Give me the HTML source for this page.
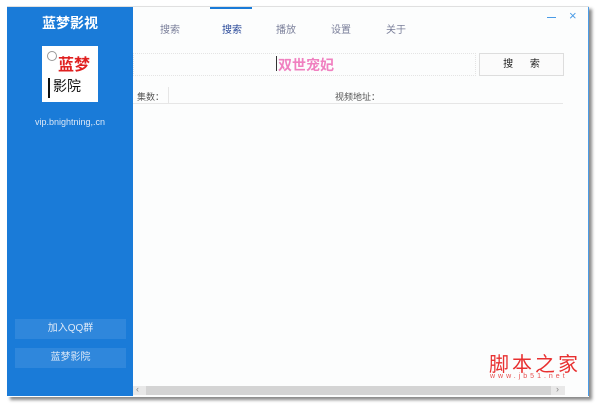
<!DOCTYPE html>
<html><head><meta charset="utf-8"><style>
body{margin:0;width:600px;height:406px;background:#fff;position:relative;overflow:hidden;font-family:"Liberation Sans","Noto Sans CJK SC",sans-serif;}
.a{position:absolute}
.win{left:7px;top:6px;width:582px;height:390px;background:#fcfdfd;border-top:1px solid #e0e0e0;box-shadow:3px 3px 3px #8a8a8a;}
.side{left:7px;top:7px;width:126px;height:389px;background:#1a7bd8;}
.t{font-size:10px;color:#7a7f9a;top:21px}
.btn{left:15px;width:111px;height:20px;background:#2f87dc;color:#dfeaf8;font-size:10px;text-align:center;line-height:20px}
</style></head><body>
<div class="a win"></div>
<div class="a" style="left:588px;top:7px;width:1px;height:389px;background:#4a9be6"></div>
<div class="a side"></div>
<div class="a" style="left:7px;top:13px;width:126px;text-align:center;color:#fff;font-weight:bold;font-size:14px">蓝梦影视</div>
<div class="a" style="left:42px;top:46px;width:56px;height:56px;background:#fff"></div>
<div class="a" style="left:58px;top:57px;color:#e02020;font-size:16px;font-weight:bold;line-height:17px">蓝梦</div>
<div class="a" style="left:48px;top:78px;color:#111;font-size:14px;line-height:16px;border-left:2px solid #111;padding-left:3px;height:20px">影院</div>
<div class="a" style="left:47px;top:51px;width:8px;height:8px;border:1px solid #999;border-radius:5px"></div>
<div class="a" style="left:7px;top:117px;width:126px;text-align:center;color:#dde9f8;font-size:9px">vip.bnightning,.cn</div>
<div class="a btn" style="top:319px">加入QQ群</div>
<div class="a btn" style="top:348px">蓝梦影院</div>
<div class="a" style="left:210px;top:7px;width:42px;height:2px;background:#1a7bd8"></div>
<div class="a t" style="left:160px">搜索</div>
<div class="a t" style="left:222px;color:#2a4a9a">搜索</div>
<div class="a t" style="left:276px">播放</div>
<div class="a t" style="left:331px">设置</div>
<div class="a t" style="left:386px">关于</div>
<div class="a" style="left:547px;top:17px;width:9px;height:1px;background:#4a9be6"></div>
<div class="a" style="left:569px;top:8px;color:#4a9be6;font-size:13px">×</div>
<div class="a" style="left:133px;top:53px;width:341px;height:21px;border:1px dotted #e4e4e4"></div>
<div class="a" style="left:276px;top:56px;width:1px;height:15px;background:#333"></div>
<div class="a" style="left:278px;top:55px;color:#f080c0;font-size:14px;font-weight:bold">双世宠妃</div>
<div class="a" style="left:479px;top:53px;width:83px;height:21px;border:1px solid #ddd;background:#fbfbfb;font-size:10px;text-align:center;line-height:21px;color:#222">搜&nbsp;&nbsp;&nbsp;&nbsp;&nbsp;&nbsp;索</div>
<div class="a" style="left:137px;top:90px;font-size:9px;color:#555">集数：</div>
<div class="a" style="left:168px;top:87px;width:1px;height:16px;background:#e6e6e6"></div>
<div class="a" style="left:335px;top:90px;font-size:9px;color:#555">视频地址：</div>
<div class="a" style="left:133px;top:103px;width:430px;height:1px;background:#e6e6e6"></div>
<div class="a" style="left:133px;top:386px;width:432px;height:9px;background:#e8e8e8"></div>
<div class="a" style="left:146px;top:386px;width:405px;height:9px;background:#d4d4d4"></div>
<div class="a" style="left:136px;top:384px;font-size:9px;color:#888">‹</div>
<div class="a" style="left:556px;top:384px;font-size:9px;color:#888">›</div>
<div class="a" style="left:489px;top:348px;color:#e83030;font-size:20px;letter-spacing:3px;font-family:'Noto Sans CJK SC',sans-serif">脚本之家</div>
<div class="a" style="left:490px;top:373px;color:#e85050;font-size:7px;letter-spacing:3px">www.jb51.net</div>
</body></html>
